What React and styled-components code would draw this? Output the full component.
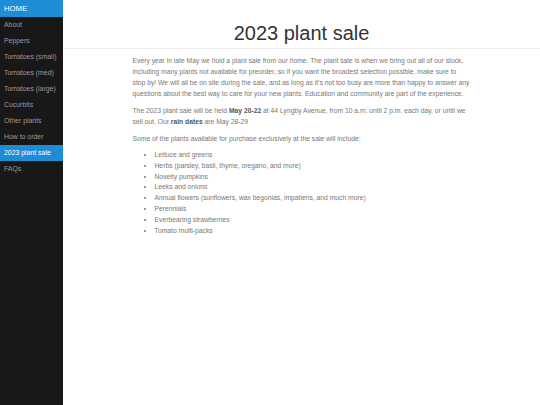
import React from "react";
import styled, { createGlobalStyle } from "styled-components";

const Global = createGlobalStyle`
  html, body { margin: 0; padding: 0; background: #fff; }
  body { font-family: "Liberation Sans", Arial, sans-serif; }
  * { box-sizing: border-box; }
`;

const Layout = styled.div`
  display: flex;
  min-height: 405px;
`;

const Sidebar = styled.nav`
  width: 63px;
  flex: 0 0 63px;
  background: #191818;
`;

const MenuHeading = styled.div`
  height: 17px;
  line-height: 17px;
  padding-left: 4px;
  background: #1f8dd6;
  color: #fff;
  font-size: 7.7px;
  text-transform: uppercase;
`;

const MenuList = styled.ul`
  list-style: none;
  margin: 0;
  padding: 0;
`;

const MenuItem = styled.li`
  height: 16px;
  line-height: 16px;
  padding-left: 4px;
  font-size: 6.9px;
  white-space: nowrap;
  color: ${(p) => (p.$selected ? "#fff" : "#999")};
  background: ${(p) => (p.$selected ? "#1f8dd6" : "transparent")};
`;

const Main = styled.main`
  flex: 1;
`;

const Header = styled.header`
  padding: 22px 0 3px;
  border-bottom: 1px solid #eee;
  text-align: center;
`;

const Title = styled.h1`
  margin: 0;
  font-size: 20px;
  line-height: 23px;
  font-weight: 300;
  color: #333;
`;

const Content = styled.div`
  max-width: 338px;
  margin: 0 auto;
  padding-top: 1px;
  font-size: 6.75px;
  line-height: 11px;
  color: #777;
`;

const P = styled.p`
  margin: 5px 0 6px;
`;

const B = styled.b`
  color: #555;
`;

const List = styled.ul`
  margin: 6px 0;
  padding-left: 22px;
  line-height: 10.8px;
`;

const items = [
  "About",
  "Peppers",
  "Tomatoes (small)",
  "Tomatoes (med)",
  "Tomatoes (large)",
  "Cucurbits",
  "Other plants",
  "How to order",
  "2023 plant sale",
  "FAQs",
];

const plants = [
  "Lettuce and greens",
  "Herbs (parsley, basil, thyme, oregano, and more)",
  "Novelty pumpkins",
  "Leeks and onions",
  "Annual flowers (sunflowers, wax begonias, impatiens, and much more)",
  "Perennials",
  "Everbearing strawberries",
  "Tomato multi-packs",
];

export default function App() {
  return (
    <>
      <Global />
      <Layout>
        <Sidebar>
          <MenuHeading>Home</MenuHeading>
          <MenuList>
            {items.map((it) => (
              <MenuItem key={it} $selected={it === "2023 plant sale"}>
                {it}
              </MenuItem>
            ))}
          </MenuList>
        </Sidebar>
        <Main>
          <Header>
            <Title>2023 plant sale</Title>
          </Header>
          <Content>
            <P>
              Every year in late May we hold a plant sale from our home. The plant sale is when we
              bring out all of our stock, including many plants not available for preorder, so if
              you want the broadest selection possible, make sure to stop by! We will all be on site
              during the sale, and as long as it's not too busy are more than happy to answer any
              questions about the best way to care for your new plants. Education and community are
              part of the experience.
            </P>
            <P>
              The 2023 plant sale will be held <B>May 20-22</B> at 44 Lyngby Avenue, from 10 a.m.
              until 2 p.m. each day, or until we sell out. Our <B>rain dates</B> are May 28-29
            </P>
            <P>Some of the plants available for purchase exclusively at the sale will include:</P>
            <List>
              {plants.map((p) => (
                <li key={p}>{p}</li>
              ))}
            </List>
          </Content>
        </Main>
      </Layout>
    </>
  );
}
